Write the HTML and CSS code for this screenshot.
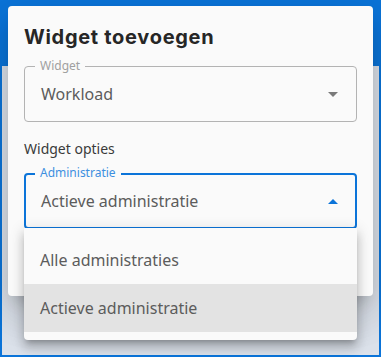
FILE: index.html
```html
<html>

<head>
    <link rel="stylesheet" href="styles.css">
</head>

<body>
    <div class="frame">
        <div class="appbar"></div>
        <div class="backdrop"></div>

        <div class="dialog">
            <h2 class="dialog-title">Widget toevoegen</h2>

            <div class="field">
                <span class="field-label">Widget</span>
                <span class="field-value">Workload</span>
                <span class="arrow arrow-down"></span>
            </div>

            <p class="section-title">Widget opties</p>

            <div class="field field-focused">
                <span class="field-label">Administratie</span>
                <span class="field-value">Actieve administratie</span>
                <span class="arrow arrow-up"></span>
            </div>
        </div>

        <ul class="menu">
            <li class="menu-item">Alle administraties</li>
            <li class="menu-item selected">Actieve administratie</li>
        </ul>
    </div>
</body>

</html>
```

FILE: styles.css
```css
* {
    padding: 0;
    margin: 0;
    box-sizing: border-box;
}

body {
    width: 381px;
    height: 357px;
    overflow: hidden;
    font-family: "Noto Sans", "Open Sans", sans-serif;
}

.frame {
    position: relative;
    width: 381px;
    height: 357px;
    border: 2px solid #0b74d9;
    background-color: #dce2eb;
}

.appbar {
    height: 64px;
    background-color: #0b74d9;
}

.dialog {
    position: absolute;
    left: 6px;
    top: 4px;
    width: 365px;
    height: 290px;
    padding: 15px 16px 16px;
    background-color: #fafafa;
    border-radius: 4px;
    box-shadow: 0 11px 15px -7px rgba(0, 0, 0, 0.2), 0 24px 38px 3px rgba(0, 0, 0, 0.1), 0 9px 46px 8px rgba(0, 0, 0, 0.08);
}

.dialog-title {
    font: 700 20px "Inter", sans-serif;
    letter-spacing: 0.7px;
    line-height: 32px;
    color: #262626;
    margin-bottom: 13px;
}

.field {
    position: relative;
    display: flex;
    align-items: center;
    height: 56px;
    padding: 0 16px;
    border: 1px solid #b3b3b3;
    border-radius: 4px;
}

.field-label {
    position: absolute;
    left: 10px;
    top: -9px;
    padding: 0 5px;
    font-size: 12px;
    line-height: 16px;
    color: #a0a0a0;
    background-color: #fafafa;
}

.field-value {
    flex: 1;
    font-size: 16px;
    color: #5c5c5c;
}

.arrow {
    width: 0;
    height: 0;
    margin-right: 2px;
    border-left: 5px solid transparent;
    border-right: 5px solid transparent;
}

.arrow-down {
    border-top: 5px solid #7a7a7a;
}

.arrow-up {
    border-bottom: 5px solid #0b74d9;
}

.section-title {
    margin-top: 17px;
    margin-bottom: 14px;
    font-size: 14px;
    line-height: 20px;
    color: #3a3a3a;
}

.field-focused {
    border: 2px solid #0b74d9;
    padding: 0 15px;
}

.field-focused .field-label {
    left: 9px;
    top: -10px;
    color: #3d8fe0;
}

.menu {
    position: absolute;
    left: 22px;
    top: 226px;
    width: 333px;
    padding: 8px 0;
    list-style: none;
    background-color: #fafafa;
    border-radius: 0 0 4px 4px;
    box-shadow: 0 5px 5px -3px rgba(0, 0, 0, 0.2), 0 8px 10px 1px rgba(0, 0, 0, 0.14), 0 3px 14px 2px rgba(0, 0, 0, 0.12);
}

.menu-item {
    height: 48px;
    padding: 0 16px;
    display: flex;
    align-items: center;
    font-size: 16px;
    color: #5c5c5c;
}

.menu-item.selected {
    background-color: #e3e3e3;
}
```
